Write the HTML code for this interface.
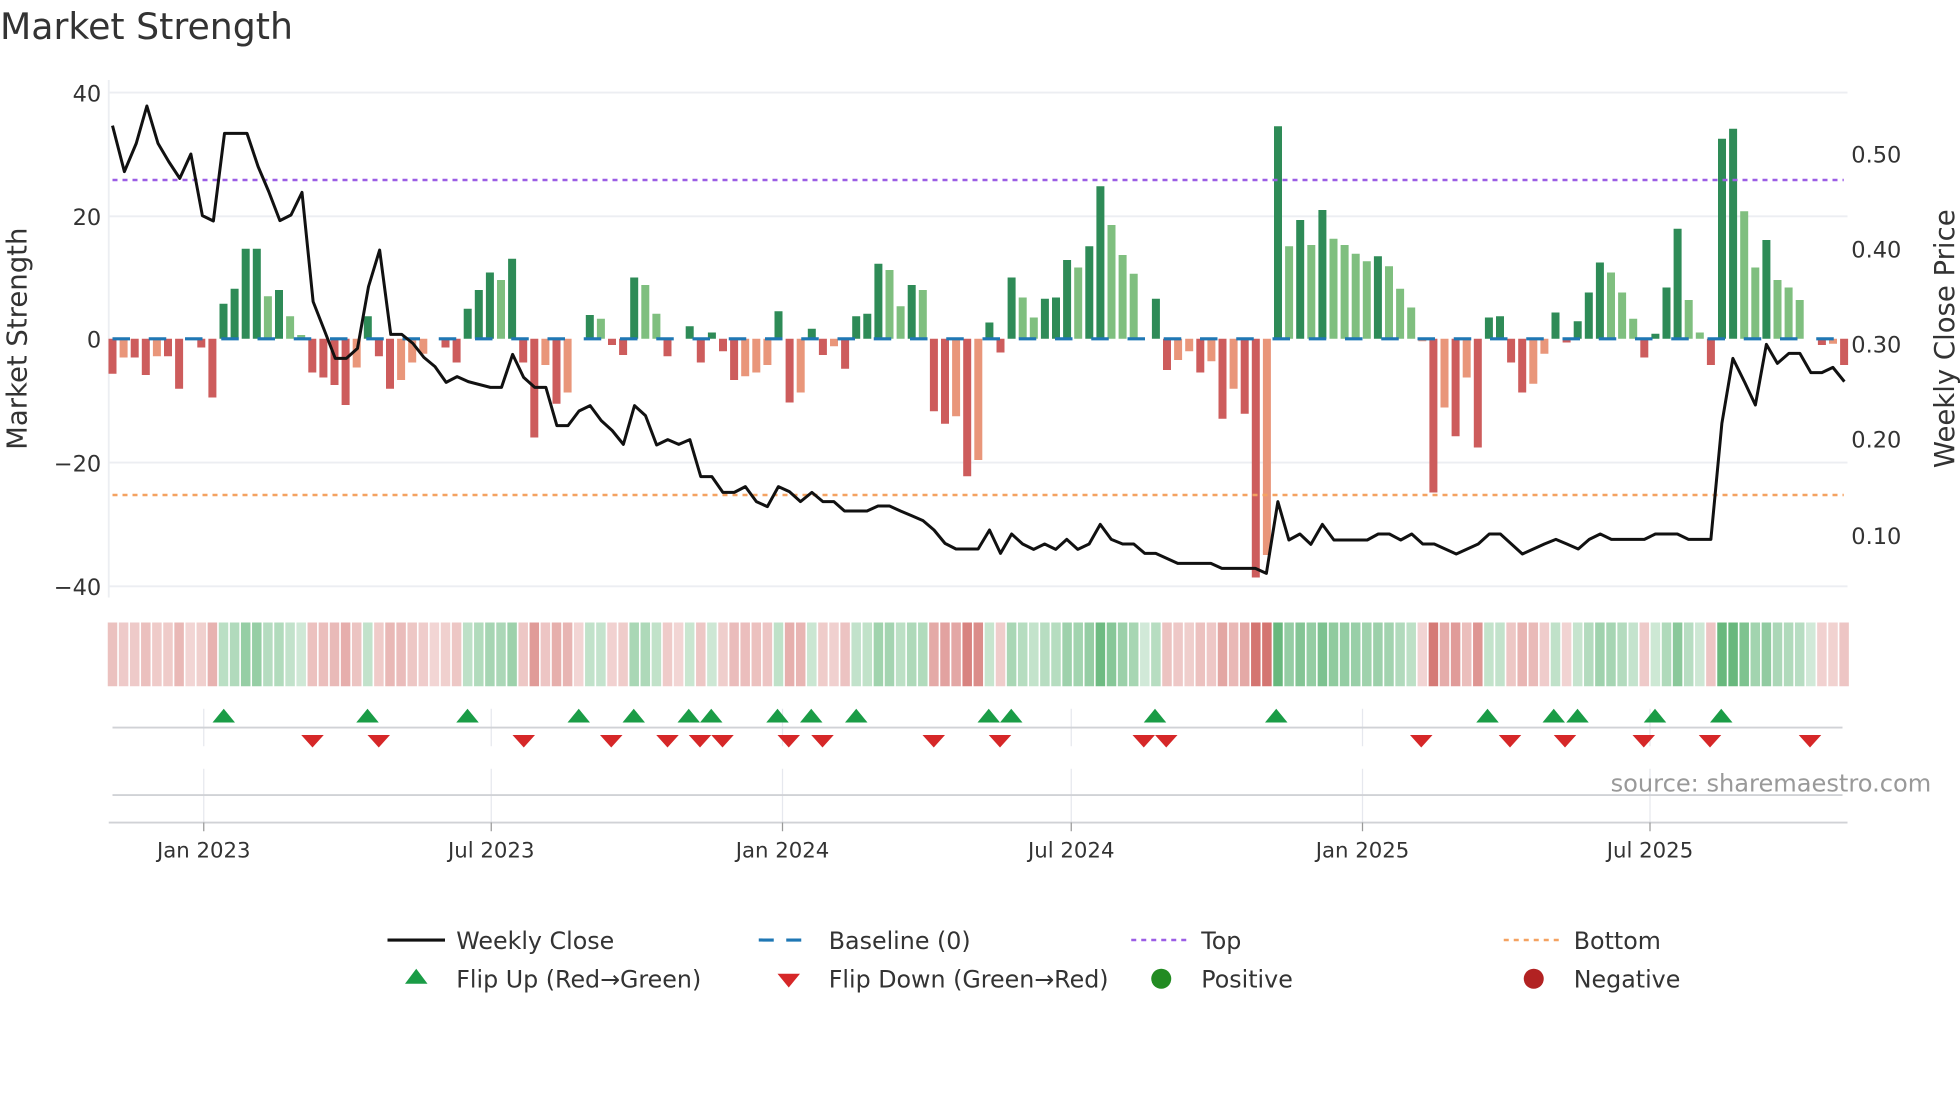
<!DOCTYPE html>
<html><head><meta charset="utf-8"><style>
html,body{margin:0;padding:0;background:#fff;}
svg{display:block;font-family:"DejaVu Sans","Liberation Sans",sans-serif;}
</style></head><body>
<svg id="c" width="1960" height="1102" viewBox="0 0 1568 881.6" xmlns="http://www.w3.org/2000/svg">
<rect width="1568" height="882" fill="#fff"/>
<text x="0" y="31" font-size="29" fill="#333">Market Strength</text>
<g stroke="#eceef2" stroke-width="1.5">
<line x1="87" y1="74" x2="1478" y2="74"/><line x1="87" y1="173" x2="1478" y2="173"/>
<line x1="87" y1="370" x2="1478" y2="370"/><line x1="87" y1="469" x2="1478" y2="469"/>
<line x1="87" y1="64" x2="87" y2="478"/>
</g>
<g font-size="18" fill="#333" text-anchor="end">
<text x="81" y="81">40</text><text x="81" y="180">20</text><text x="81" y="278">0</text>
<text x="81" y="377">−20</text><text x="81" y="476">−40</text>
</g>
<g font-size="18" fill="#333">
<text x="1481" y="130">0.50</text><text x="1481" y="206">0.40</text><text x="1481" y="282">0.30</text>
<text x="1481" y="358">0.20</text><text x="1481" y="435">0.10</text>
</g>
<text transform="translate(21,271) rotate(-90)" font-size="22" fill="#333" text-anchor="middle">Market Strength</text>
<text transform="translate(1563,271) rotate(-90)" font-size="22" fill="#333" text-anchor="middle">Weekly Close Price</text>
<g id="bars"></g>
<line x1="90" y1="271" x2="1475" y2="271" stroke="#1f77b4" stroke-width="2.5" stroke-dasharray="14 15"/>
<line x1="90" y1="144" x2="1475" y2="144" stroke="#9b5de5" stroke-width="2" stroke-dasharray="4 4"/>
<line x1="90" y1="396" x2="1475" y2="396" stroke="#f4a261" stroke-width="2" stroke-dasharray="4 4"/>
<polyline id="price" fill="none" stroke="#111" stroke-width="2.4" stroke-linejoin="round"/>
<g id="strip"></g>
<g stroke="#e6e8ee" stroke-width="1">
<line x1="163" y1="567" x2="163" y2="597"/><line x1="393" y1="567" x2="393" y2="597"/><line x1="626" y1="567" x2="626" y2="597"/><line x1="857" y1="567" x2="857" y2="597"/><line x1="1090" y1="567" x2="1090" y2="597"/><line x1="1320" y1="567" x2="1320" y2="597"/>
<line x1="163" y1="615" x2="163" y2="658"/><line x1="393" y1="615" x2="393" y2="658"/><line x1="626" y1="615" x2="626" y2="658"/><line x1="857" y1="615" x2="857" y2="658"/><line x1="1090" y1="615" x2="1090" y2="658"/><line x1="1320" y1="615" x2="1320" y2="658"/>
</g>
<line x1="90" y1="582" x2="1474" y2="582" stroke="#d0d2d6" stroke-width="1.5"/>
<line x1="90" y1="636" x2="1474" y2="636" stroke="#d0d2d6" stroke-width="1.5"/>
<line x1="87" y1="658" x2="1478" y2="658" stroke="#d0d2d6" stroke-width="1.5"/>
<g stroke="#999" stroke-width="1">
<line x1="163" y1="658" x2="163" y2="665"/><line x1="393" y1="658" x2="393" y2="665"/><line x1="626" y1="658" x2="626" y2="665"/><line x1="857" y1="658" x2="857" y2="665"/><line x1="1090" y1="658" x2="1090" y2="665"/><line x1="1320" y1="658" x2="1320" y2="665"/>
</g>
<g id="flips"></g>
<text x="1545" y="633" font-size="19.3" fill="#999" text-anchor="end">source: sharemaestro.com</text>
<g font-size="17" fill="#333" text-anchor="middle">
<text x="163" y="686">Jan 2023</text><text x="393" y="686">Jul 2023</text><text x="626" y="686">Jan 2024</text>
<text x="857" y="686">Jul 2024</text><text x="1090" y="686">Jan 2025</text><text x="1320" y="686">Jul 2025</text>
</g>
<g font-size="19" fill="#333">
<line x1="310" y1="752" x2="356" y2="752" stroke="#111" stroke-width="2.5"/><text x="365" y="759">Weekly Close</text>
<line x1="607" y1="752" x2="651" y2="752" stroke="#1f77b4" stroke-width="2.5" stroke-dasharray="12 10"/><text x="663" y="759">Baseline (0)</text>
<line x1="905" y1="752" x2="949" y2="752" stroke="#9b5de5" stroke-width="2" stroke-dasharray="4 4"/><text x="961" y="759">Top</text>
<line x1="1203" y1="752" x2="1247" y2="752" stroke="#f4a261" stroke-width="2" stroke-dasharray="4 4"/><text x="1259" y="759">Bottom</text>
<polygon points="324,787 342,787 333,775" fill="#1a9c46"/><text x="365" y="790">Flip Up (Red→Green)</text>
<polygon points="622,779 640,779 631,790" fill="#d62728"/><text x="663" y="790">Flip Down (Green→Red)</text>
<circle cx="929" cy="783" r="8" fill="#228b22"/><text x="961" y="790">Positive</text>
<circle cx="1227" cy="783" r="8" fill="#b22222"/><text x="1259" y="790">Negative</text>
</g>
</svg>
<script>
var NS="http://www.w3.org/2000/svg";
var B=[[-28,'R'],[-15,'O'],[-15,'R'],[-29,'R'],[-14,'O'],[-14,'R'],[-40,'R'],[0,'Z'],[-7,'R'],[-47,'R'],
[28,'D'],[40,'D'],[72,'D'],[72,'D'],[34,'L'],[39,'D'],[18,'L'],[3,'L'],[-27,'R'],[-31,'R'],
[-37,'R'],[-53,'R'],[-23,'O'],[18,'D'],[-14,'R'],[-40,'R'],[-33,'O'],[-19,'O'],[-12,'O'],[0,'Z'],
[-7,'R'],[-19,'R'],[24,'D'],[39,'D'],[53,'D'],[47,'L'],[64,'D'],[-19,'R'],[-79,'R'],[-21,'O'],
[-52,'R'],[-43,'O'],[0,'Z'],[19,'D'],[16,'L'],[-5,'R'],[-13,'R'],[49,'D'],[43,'L'],[20,'L'],
[-14,'R'],[0,'Z'],[10,'D'],[-19,'R'],[5,'D'],[-10,'R'],[-33,'R'],[-30,'O'],[-27,'O'],[-21,'O'],
[22,'D'],[-51,'R'],[-43,'O'],[8,'D'],[-13,'R'],[-6,'O'],[-24,'R'],[18,'D'],[20,'D'],[60,'D'],
[55,'L'],[26,'L'],[43,'D'],[39,'L'],[-58,'R'],[-68,'R'],[-62,'O'],[-110,'R'],[-97,'O'],[13,'D'],
[-11,'R'],[49,'D'],[33,'L'],[17,'L'],[32,'D'],[33,'D'],[63,'D'],[57,'L'],[74,'D'],[122,'D'],
[91,'L'],[67,'L'],[52,'L'],[0,'Z'],[32,'D'],[-25,'R'],[-17,'O'],[-10,'O'],[-27,'R'],[-18,'O'],
[-64,'R'],[-40,'O'],[-60,'R'],[-191,'R'],[-173,'O'],[170,'D'],[74,'L'],[95,'D'],[75,'L'],[103,'D'],
[80,'L'],[75,'L'],[68,'L'],[62,'L'],[66,'D'],[58,'L'],[40,'L'],[25,'L'],[-2,'O'],[-123,'R'],
[-55,'O'],[-78,'R'],[-31,'O'],[-87,'R'],[17,'D'],[18,'D'],[-19,'R'],[-43,'R'],[-36,'O'],[-12,'O'],
[21,'D'],[-3,'R'],[14,'D'],[37,'D'],[61,'D'],[53,'L'],[37,'L'],[16,'L'],[-15,'R'],[4,'D'],
[41,'D'],[88,'D'],[31,'L'],[5,'L'],[-21,'R'],[160,'D'],[168,'D'],[102,'L'],[57,'L'],[79,'D'],
[47,'L'],[41,'L'],[31,'L'],[0,'Z'],[-5,'R'],[-4,'O'],[-21,'R']];
var col={D:'#2e8b57',L:'#7fbf7f',R:'#cd5c5c',O:'#e9967a'};
var step=8.88,x0=90;
var bars=document.getElementById('bars'),strip=document.getElementById('strip');
var last=-1;
B.forEach(function(b,i){
  var x=x0+i*step,v=b[0];
  if(v!==0){var r=document.createElementNS(NS,'rect');
    r.setAttribute('x',x-3.2);r.setAttribute('width',6.4);
    r.setAttribute('y',v>0?271-v:271);r.setAttribute('height',Math.abs(v));
    r.setAttribute('fill',col[b[1]]);bars.appendChild(r);}
  var s=v>0?1:(v<0?-1:last); if(v!==0) last=s;
  var t=Math.min(1,Math.abs(v)/130), op=0.24+0.55*t;
  var q=document.createElementNS(NS,'rect');
  q.setAttribute('x',x-3.8);q.setAttribute('width',7.6);q.setAttribute('y',498);q.setAttribute('height',51);
  q.setAttribute('fill',s>0?'#3fa55a':'#c8504b');q.setAttribute('fill-opacity',op);strip.appendChild(q);
});
var z3=[[30,137],[60,275],[90,190],[117,78],[145,190],[172,245],[200,295],[228,222],[257,407],[285,423],[313,160],[370,160],[398,260],[425,335],[453,422],[481,405],[509,337],[537,665],[565,750],[593,835],[621,835],[649,805],[677,620],[705,510],[733,763],[761,763],[789,790],[817,832],[845,860],[873,907],[901,890],[929,905],[985,922],[1013,922],[1041,823],[1069,892],[1097,922],[1125,922],[1153,1037],[1181,1037],[1209,993],[1237,977],[1265,1022],[1293,1052],[1321,1093],[1349,977],[1377,1007],[1405,1095],[1433,1079],[1461,1093],[1489,1079]];
var z4=[[3,1190],[30,1190],[57,1237],[85,1237],[112,1220],[139,1265],[166,1280],[193,1220],[220,1235],[247,1265],[275,1237],[302,1265],[329,1265],[355,1293],[383,1293],[410,1293],[437,1278],[465,1278],[492,1293],[519,1307],[547,1322],[574,1350],[601,1390],[628,1407],[655,1407],[682,1407],[710,1350],[737,1420],[764,1362],[791,1392],[818,1408],[845,1392],[872,1408],[899,1378],[926,1408],[954,1392],[981,1333],[1008,1378],[1036,1392],[1063,1392],[1090,1420],[1117,1420],[1144,1435],[1171,1450],[1198,1450],[1225,1450],[1252,1450],[1279,1465],[1306,1465],[1333,1465],[1361,1465],[1388,1480],[1416,1265],[1443,1380],[1470,1362],[1497,1393]];
var z5=[[5,1333],[33,1380],[60,1380],[88,1380],[115,1380],[142,1362],[169,1362],[197,1380],[224,1362],[251,1392],[279,1392],[306,1407],[333,1422],[360,1407],[387,1392],[414,1362],[441,1362],[468,1392],[495,1422],[522,1407],[549,1392],[577,1378],[604,1392],[632,1407],[659,1378],[686,1362],[713,1378],[740,1378],[767,1378],[794,1378],[821,1362],[848,1362],[875,1362],[902,1378],[929,1378],[957,1378],[984,1030],[1011,835],[1039,905],[1066,975],[1093,793],[1120,850],[1148,820],[1175,820],[1202,878],[1229,878],[1256,862],[1284,905]];
var pts=[];
function add(arr,f){arr.forEach(function(p){var i=f(p[0]);pts.push((x0+i*step).toFixed(1)+','+(64+p[1]/3.75).toFixed(1));});}
add(z3,function(z){return (z-30)/28.05;});
add(z4,function(z){return 53+(z-3)/27.18;});
add(z5,function(z){return 109+(z-5)/27.2;});
document.getElementById('price').setAttribute('points',pts.join(' '));
var up=[179,294,374,463,507,551,569,622,649,685,791,809,924,1021,1190,1243,1262,1324,1377];
var dn=[250,303,419,489,534,560,578,631,658,747,800,915,933,1137,1208,1252,1315,1368,1448];
var fl=document.getElementById('flips');
up.forEach(function(x){var p=document.createElementNS(NS,'polygon');p.setAttribute('points',(x-9)+',578 '+(x+9)+',578 '+x+',567');p.setAttribute('fill','#1a9c46');fl.appendChild(p);});
dn.forEach(function(x){var p=document.createElementNS(NS,'polygon');p.setAttribute('points',(x-9)+',588 '+(x+9)+',588 '+x+',598');p.setAttribute('fill','#d62728');fl.appendChild(p);});
</script>
</body></html>
